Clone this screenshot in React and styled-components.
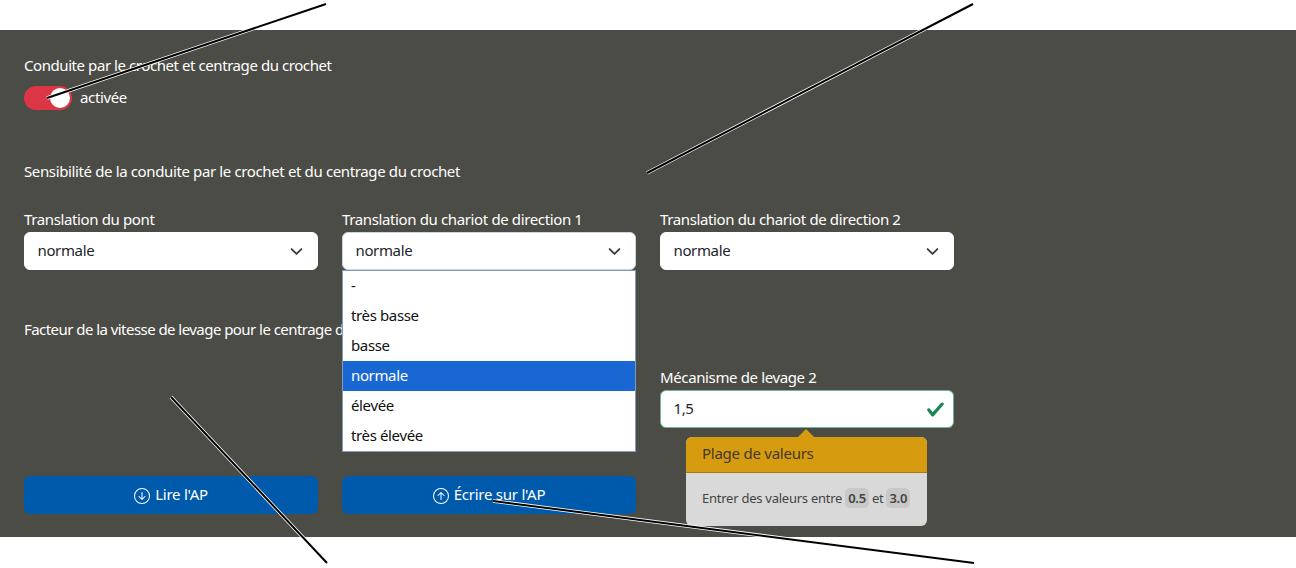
import React from "react";
import styled, { createGlobalStyle } from "styled-components";
import { BsArrowDownCircle, BsArrowUpCircle } from "react-icons/bs";

const GlobalStyle = createGlobalStyle`
  html, body {
    margin: 0;
    background: #fff;
  }
  * {
    box-sizing: border-box;
  }
`;

const Page = styled.div`
  position: relative;
  width: 1296px;
  height: 568px;
  padding-top: 30px;
  overflow: hidden;
  font-family: "Noto Sans", "Liberation Sans", sans-serif;
  font-size: 15px;
  line-height: 22px;
  letter-spacing: -0.37px;
`;

const Panel = styled.div`
  height: 507px;
  padding: 24px 24px 0;
  background: #4c4c46;
  color: #fff;
`;

const Heading = styled.div`
  height: 24px;
  letter-spacing: ${(props) => props.$spacing || "inherit"};
`;

const SwitchRow = styled.div`
  display: flex;
  gap: 8px;
  margin-top: 8px;
  height: 24px;
`;

const Switch = styled.div`
  display: flex;
  justify-content: flex-end;
  align-items: center;
  width: 48px;
  height: 24px;
  padding-right: 2px;
  border-radius: 12px;
  background: #dc3545;
`;

const Knob = styled.div`
  width: 20px;
  height: 20px;
  border-radius: 50%;
  background: #fff;
`;

const Section = styled.div`
  margin-top: ${(props) => props.$top}px;
`;

const FieldGrid = styled.div`
  display: grid;
  grid-template-columns: repeat(3, 294px);
  column-gap: 24px;
  margin-top: 24px;
`;

const Field = styled.div`
  position: relative;
  min-width: 0;
`;

const FieldLabel = styled.div`
  height: 24px;
`;

const Select = styled.div`
  display: flex;
  align-items: center;
  justify-content: space-between;
  height: 38px;
  padding: 0 14px 2px 12.5px;
  border: 1px solid ${(props) => (props.$focused ? "#c9d6e2" : "#fff")};
  border-radius: 6px;
  background: #fff;
  color: #212529;
  svg {
    margin-top: 2px;
  }
`;

const Menu = styled.div`
  position: absolute;
  top: 62px;
  left: 0;
  z-index: 2;
  width: 294px;
  height: 182px;
  border: 1px solid #7f9db9;
  background: #fff;
  color: #111;
`;

const Option = styled.div`
  height: 30px;
  padding-left: 8px;
  line-height: 28px;
  background: ${(props) => (props.$selected ? "#1967d2" : "transparent")};
  color: ${(props) => (props.$selected ? "#fff" : "#111")};
`;

const ValueInput = styled.div`
  display: flex;
  align-items: center;
  justify-content: space-between;
  height: 38px;
  padding: 0 8px 2px 12.5px;
  border: 1px solid #6fb39a;
  border-radius: 6px;
  background: #fff;
  color: #212529;
  svg {
    margin-top: 2px;
  }
`;

const Popover = styled.div`
  position: absolute;
  top: 71px;
  left: 26px;
  z-index: 2;
  width: 241px;
  height: 89px;
  border-radius: 6px;
  background: #d9d9d9;
  color: #444;
  font-size: 13px;
  letter-spacing: -0.25px;
  &::before {
    content: "";
    position: absolute;
    top: -8px;
    left: 112px;
    border-left: 8px solid transparent;
    border-right: 8px solid transparent;
    border-bottom: 8px solid #d69b0e;
  }
`;

const PopoverHeader = styled.div`
  height: 36px;
  padding-left: 16px;
  border-bottom: 1px solid #a67a0c;
  border-radius: 6px 6px 0 0;
  background: #d69b0e;
  color: #43392a;
  font-size: 15px;
  line-height: 32px;
`;

const PopoverBody = styled.div`
  display: flex;
  align-items: center;
  gap: 3px;
  height: 53px;
  padding: 0 0 4px 16px;
`;

const Code = styled.span`
  padding: 0 3px;
  border-radius: 5px;
  background: #c8c8c8;
  font-weight: 600;
  line-height: 20px;
`;

const ButtonGrid = styled.div`
  display: grid;
  grid-template-columns: repeat(2, 294px);
  column-gap: 24px;
  margin-top: 48px;
`;

const Button = styled.button`
  display: flex;
  align-items: center;
  justify-content: center;
  gap: 5px;
  height: 38px;
  padding: 0 0 2px;
  border: 0;
  border-radius: 6px;
  background: #005aab;
  color: #fff;
  font: inherit;
  letter-spacing: -0.25px;
  svg {
    width: 16px;
    height: 16px;
    margin-top: 3px;
  }
`;

const Annotations = styled.svg`
  position: absolute;
  top: 0;
  left: 0;
  z-index: 5;
  pointer-events: none;
`;

const lines = [
  [326, 4, 47, 98],
  [973, 4, 647, 173],
  [327, 563, 171, 397],
  [974, 563, 493, 501],
];

const Chevron = () => (
  <svg width="13" height="13" viewBox="0 0 16 16" fill="none">
    <path d="m2 5 6 6 6-6" stroke="#343a40" strokeWidth="2.2" strokeLinecap="round" strokeLinejoin="round" />
  </svg>
);

const ValidIcon = () => (
  <svg width="19" height="19" viewBox="0 0 8 8">
    <path
      fill="#198754"
      d="M2.3 6.73.6 4.53c-.4-1.04.46-1.4 1.1-.8l1.1 1.4 3.4-3.8c.6-.63 1.6-.27 1.2.7l-4 4.6c-.43.5-.8.4-1.1.1z"
    />
  </svg>
);

const options = ["-", "très basse", "basse", "normale", "élevée", "très élevée"];

const App = () => {
  return (
    <Page>
      <GlobalStyle />
      <Panel>
        <Heading $spacing="-0.43px">Conduite par le crochet et centrage du crochet</Heading>
        <SwitchRow>
          <Switch>
            <Knob />
          </Switch>
          activée
        </SwitchRow>

        <Section $top={50}>
          <Heading>Sensibilité de la conduite par le crochet et du centrage du crochet</Heading>
          <FieldGrid>
            <Field>
              <FieldLabel>Translation du pont</FieldLabel>
              <Select>
                normale
                <Chevron />
              </Select>
            </Field>
            <Field>
              <FieldLabel>Translation du chariot de direction 1</FieldLabel>
              <Select $focused>
                normale
                <Chevron />
              </Select>
              <Menu>
                {options.map((option) => (
                  <Option key={option} $selected={option === "normale"}>
                    {option}
                  </Option>
                ))}
              </Menu>
            </Field>
            <Field>
              <FieldLabel>Translation du chariot de direction 2</FieldLabel>
              <Select>
                normale
                <Chevron />
              </Select>
            </Field>
          </FieldGrid>
        </Section>

        <Section $top={48}>
          <Heading $spacing="-0.55px">Facteur de la vitesse de levage pour le centrage du crochet</Heading>
          <FieldGrid>
            <Field />
            <Field />
            <Field>
              <FieldLabel>Mécanisme de levage 2</FieldLabel>
              <ValueInput>
                1,5
                <ValidIcon />
              </ValueInput>
              <Popover>
                <PopoverHeader>Plage de valeurs</PopoverHeader>
                <PopoverBody>
                  Entrer des valeurs entre <Code>0.5</Code> et <Code>3.0</Code>
                </PopoverBody>
              </Popover>
            </Field>
          </FieldGrid>
        </Section>

        <ButtonGrid>
          <Button>
            <BsArrowDownCircle />
            Lire l'AP
          </Button>
          <Button>
            <BsArrowUpCircle />
            Écrire sur l'AP
          </Button>
        </ButtonGrid>
      </Panel>

      <Annotations width="1296" height="568">
        {lines.map(([x1, y1, x2, y2]) => (
          <g key={x1}>
            <line x1={x1} y1={y1} x2={x2} y2={y2} stroke="#fff" strokeWidth="3.6" />
            <line x1={x1} y1={y1} x2={x2} y2={y2} stroke="#000" strokeWidth="2" />
          </g>
        ))}
      </Annotations>
    </Page>
  );
};

export default App;
